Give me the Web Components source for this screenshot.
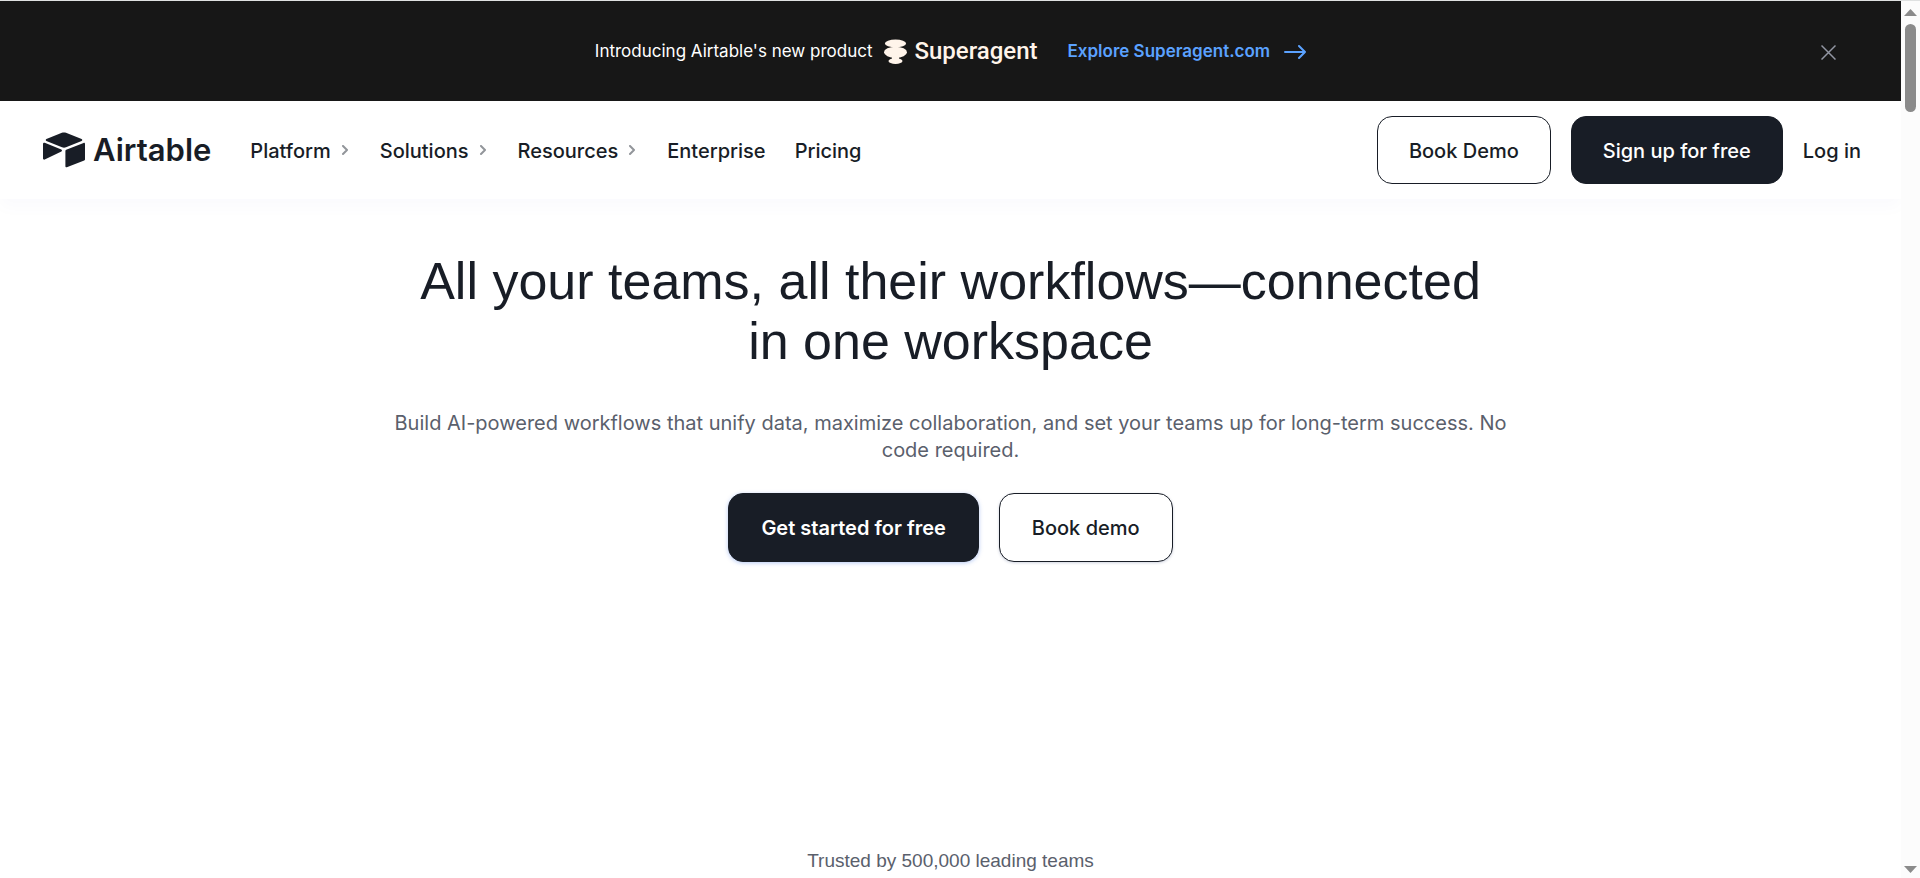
<!DOCTYPE html>
<html lang="en">
<head>
<meta charset="utf-8">
<title>Airtable</title>
<style>
  html, body { margin: 0; height: 100%; }
  body {
    --ink: #181d26;
    --muted: #5a606c;
    background: #fff;
    color: var(--ink);
    font-family: Inter, "Liberation Sans", Arial, sans-serif;
    overflow: hidden;
  }
</style>
</head>
<body>
<site-page>
  <promo-banner slot="top" href="#superagent"></promo-banner>
  <site-header slot="top">
    <nav-item menu>Platform</nav-item>
    <nav-item menu>Solutions</nav-item>
    <nav-item menu>Resources</nav-item>
    <nav-item>Enterprise</nav-item>
    <nav-item>Pricing</nav-item>
    <pill-button slot="actions">Book Demo</pill-button>
    <pill-button slot="actions" solid>Sign up for free</pill-button>
    <nav-item slot="actions">Log in</nav-item>
  </site-header>
  <hero-section>
    <span slot="title">All your teams, all their workflows—connected in one workspace</span>
    <span slot="text">Build AI-powered workflows that unify data, maximize collaboration, and set your teams up for long-term success. No code required.</span>
    <pill-button slot="actions" solid large>Get started for free</pill-button>
    <pill-button slot="actions" large>Book demo</pill-button>
  </hero-section>
  <trust-line>Trusted by 500,000 leading teams</trust-line>
</site-page>

<script>
const define = (name, html, setup) => {
  const template = document.createElement('template');
  template.innerHTML = html;
  customElements.define(name, class extends HTMLElement {
    constructor() {
      super();
      this.attachShadow({ mode: 'open' }).append(template.content.cloneNode(true));
    }
    connectedCallback() { if (setup) setup(this, this.shadowRoot); }
  });
};

define('scroll-rail', `
  <style>
    :host { display: flex; flex-direction: column; align-items: center; justify-content: space-between;
      box-sizing: border-box; width: 19px; padding: 8px 0 5px; background: #fcfcfc; }
    div { display: flex; flex-direction: column; align-items: center; gap: 8px; }
    i { width: 11px; height: 88px; border-radius: 6px; background: #8b8b8b; }
    svg { display: block; fill: #8b8b8b; }
  </style>
  <div>
    <svg width="13" height="7" viewBox="0 0 13 7"><path d="M6.5 0 13 7H0z"/></svg>
    <i></i>
  </div>
  <svg width="13" height="7" viewBox="0 0 13 7"><path d="M0 0h13L6.5 7z"/></svg>
`);

define('site-page', `
  <style>
    :host { display: flex; box-sizing: border-box; height: 100%; border-top: 1px solid #dfe1e1; }
    .view { flex: 1; min-width: 0; display: flex; flex-direction: column; overflow: hidden; }
    main { flex: 1; display: flex; flex-direction: column; justify-content: space-between; padding: 52px 0 5px; }
  </style>
  <div class="view">
    <slot name="top"></slot>
    <main><slot></slot></main>
  </div>
  <scroll-rail aria-hidden="true"></scroll-rail>
`);

define('promo-banner', `
  <style>
    :host { display: grid; grid-template-columns: 1fr auto 1fr; align-items: center; height: 100px;
      padding: 0 60px; background: #171717; color: #fff; font-size: 17px; line-height: 24px; }
    .row { grid-column: 2; display: flex; align-items: center; }
    .brand { display: flex; align-items: center; gap: 7px; margin: 0 30px 0 12px; color: #fff4ea;
      font: 500 24px/28px Roboto, "Liberation Sans", sans-serif; }
    a { display: flex; align-items: center; gap: 14px; color: #5ba2ff; font-weight: 600; text-decoration: none; }
    button { justify-self: end; width: 25px; height: 25px; padding: 0; border: 0; background: none; color: #9296a3; }
    svg { display: block; }
    button svg { margin: auto; }
  </style>
  <div class="row">
    <span>Introducing Airtable's new product</span>
    <span class="brand">
      <svg width="23" height="25" viewBox="0 0 23 25" fill="currentColor" aria-hidden="true">
        <ellipse cx="11.5" cy="4.4" rx="10.6" ry="3.9"/><ellipse cx="11.5" cy="13.3" rx="11.5" ry="5.6"/>
        <ellipse cx="11.5" cy="22" rx="7" ry="3"/><path d="M9 7h5v3H9zM8 17h7v3H8z"/>
      </svg>
      <span>Superagent</span>
    </span>
    <a><span>Explore Superagent.com</span>
      <svg width="22" height="16" viewBox="0 0 22 16" fill="none" stroke="currentColor" stroke-width="2" stroke-linecap="round" stroke-linejoin="round" aria-hidden="true"><path d="M1 9h20M15 3l6 6-6 6"/></svg>
    </a>
  </div>
  <button type="button" aria-label="Close">
    <svg width="15" height="17" viewBox="0 0 15 17" stroke="currentColor" stroke-width="1.5" aria-hidden="true"><path d="M.5 2.500l14 14M14.500 2.500l-14 14"/></svg>
  </button>
`, (host, root) => { root.querySelector('a').href = host.getAttribute('href'); });

define('site-header', `
  <style>
    :host { display: flex; align-items: center; justify-content: space-between; height: 98px;
      padding: 0 40px 0 43px; background: #fff; box-shadow: 0 8px 16px rgba(20, 60, 160, .025); }
    .logo { display: flex; align-items: center; gap: 8px; margin-right: 39px; color: inherit;
      font-size: 31px; line-height: 36px; font-weight: 600; text-decoration: none; }
    .left, nav { display: flex; align-items: center; }
    nav { gap: 29px; }
    .actions { display: flex; align-items: center; gap: 20px; }
    svg { display: block; }
  </style>
  <div class="left">
    <a class="logo" href="#home">
      <svg width="42" height="36" viewBox="0 0 42 36" fill="currentColor" aria-hidden="true">
        <path d="M18.9.8 3.4 7.1c-.9.4-.9 1.6 0 2L19 15.3c1.3.5 2.7.5 4 0L38.6 9.1c.9-.4.9-1.6 0-2L23 .8c-1.3-.5-2.8-.5-4.1 0z"/>
        <path d="M22.4 18.7v15.500c0 .8.7 1.3 1.4 1l17.400-6.8c.5-.2.8-.6.8-1V11.9c0-.8-.7-1.3-1.4-1l-17.400 6.8c-.5.2-.8.6-.8 1z"/>
        <path d="M18.4 19.5 13.2 22 1.7 27.5c-.7.4-1.7-.2-1.7-1V12c0-.9.9-1.5 1.7-1.2l16.600 6.7c.9.4.9 1.6.1 2z"/>
      </svg>
      <span>Airtable</span>
    </a>
    <nav aria-label="Main"><slot></slot></nav>
  </div>
  <div class="actions"><slot name="actions"></slot></div>
`);

define('nav-item', `
  <style>
    :host { display: block; font-size: 20px; line-height: 28px; font-weight: 500; }
    a { display: flex; align-items: center; gap: 8px; padding-top: 2px; color: inherit; text-decoration: none; }
    svg { display: none; }
    :host([menu]) svg { display: block; }
  </style>
  <a href="#"><slot></slot>
    <svg width="12" height="12" viewBox="0 0 12 12" fill="none" stroke="#92959a" stroke-width="2" stroke-linecap="round" stroke-linejoin="round" aria-hidden="true"><path d="M4 1l4 4-4 4"/></svg>
  </a>
`);

define('pill-button', `
  <style>
    :host { display: block; }
    button { display: block; box-sizing: border-box; height: 68px; padding: 2px 31px 0; border: 1px solid var(--ink);
      border-radius: 15px; background: #fff; color: var(--ink); font: inherit; font-size: 20px;
      line-height: 28px; font-weight: 500; white-space: nowrap; }
    :host([solid]) button { background: var(--ink); color: #fff; }
    :host([large]) button { height: 69px; padding: 0 32px; box-shadow: 0 1px 3px rgba(20, 40, 100, .2); }
    :host([large][solid]) button { font-weight: 600; box-shadow: 0 1px 4px rgba(45, 100, 220, .35); }
  </style>
  <button type="button"><slot></slot></button>
`);

define('hero-section', `
  <style>
    :host { display: flex; flex-direction: column; align-items: center; text-align: center; }
    h1 { max-width: 1110px; margin: 0 0 39px; font: 400 52px/60px "Liberation Sans", Arial, sans-serif; }
    p { max-width: 1120px; margin: 0 0 29px; color: var(--muted); font-size: 20px; line-height: 27px; }
    .actions { display: flex; gap: 20px; }
  </style>
  <h1><slot name="title"></slot></h1>
  <p><slot name="text"></slot></p>
  <div class="actions"><slot name="actions"></slot></div>
`);

define('trust-line', `
  <style>
    :host { display: block; text-align: center; color: var(--muted);
      font: 19px/24px "Liberation Sans", Arial, sans-serif; }
  </style>
  <slot></slot>
`);
</script>
</body>
</html>
